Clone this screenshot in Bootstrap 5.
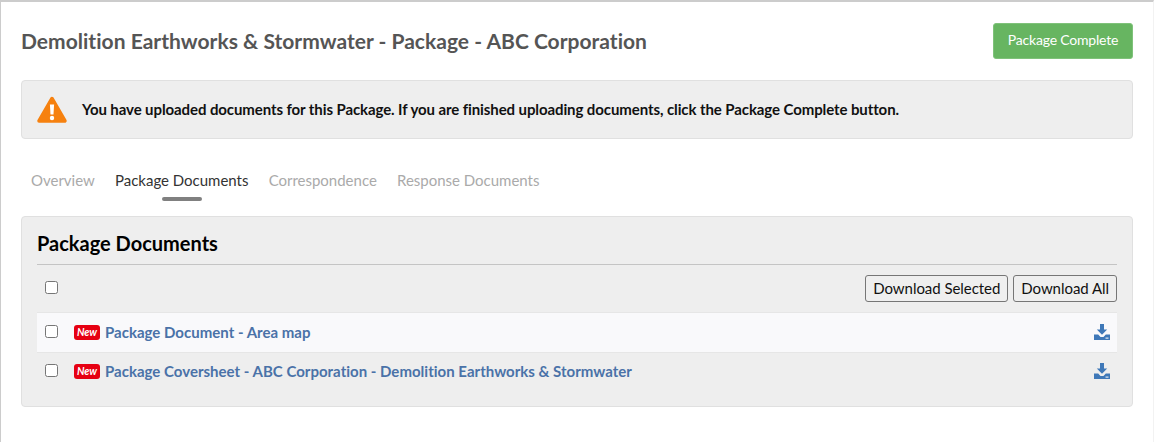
<!DOCTYPE html>
<html lang="en">
<head>
<meta charset="utf-8">
<title>Package Documents</title>
<link rel="stylesheet" href="https://cdn.jsdelivr.net/npm/bootstrap@5.3.0/dist/css/bootstrap.min.css">
<style>
html, body { height: 100%; }
body { font-family: Lato, "Liberation Sans", sans-serif; background: #fff; color: #000; font-size: 15px; }
.page-frame { height: 442px; overflow: hidden; border-top: 2px solid #ccc; border-left: 1px solid #ccc; border-right: 1px solid #f2f2f2; padding: 21px 20px 0 20px; }
.page-head { height: 36px; margin-bottom: 21px; }
.page-title { font-size: 21px; font-weight: 700; color: #555; margin: 0; letter-spacing: .02px; }
.btn-complete { height: 36px; width: 140px; padding: 0 0 3px; font-size: 14px; letter-spacing: -.2px; color: #fff; background: #67b561; border: 1px solid #7fc27a; border-radius: 3px; }
.notice { height: 59px; background: #eee; border: 1px solid #e0e0e0; border-radius: 4px; padding: 0 15px 0 14px; gap: 14px; font-size: 15px; letter-spacing: -.095px; font-weight: 700; color: #111; margin-bottom: 26px; }
.tab-bar { gap: 20.2px; padding-left: 10px; height: 51px; }
.tab-item { position: relative; display: block; font-size: 15px; line-height: 30px; color: #aaa; text-decoration: none; letter-spacing: -.01px; }
.tab-item.on { color: #333; }
.tab-item.on::after { content: ""; position: absolute; left: 47px; top: 32px; width: 40px; height: 4px; border-radius: 2px; background: #808080; }
.docs-panel { height: 191px; background: #eee; border: 1px solid #e0e0e0; border-radius: 4px; padding: 11px 15px 0; }
.docs-title { font-size: 20px; font-weight: 700; color: #000; line-height: 31px; height: 37px; border-bottom: 1px solid #c4c4c4; margin: 0; }
.tool-row { height: 47px; padding: 0 0 0 8px; }
.pick { width: 13px; height: 13px; margin: 0 0 2px; border: 1px solid #767676; border-radius: 2.5px; background: #fff; appearance: none; flex: none; }
.btn-plain { height: 27px; padding: 0 7px; font-size: 15px; line-height: 25px; letter-spacing: -.05px; color: #111; background: #efefef; border: 1px solid #767676; border-radius: 3px; }
.doc-row { padding: 0 7px 1px 8px; }
.doc-row.shade { height: 41px; background: #f9f9fb; border-top: 1px solid #e6e6e6; border-bottom: 1px solid #e6e6e6; }
.doc-row.plain { height: 37px; }
.flag-new { width: 26px; height: 15px; margin: 0 5px 0 16px; background: #e60012; color: #fff; font-size: 10.5px; font-weight: 700; font-style: italic; line-height: 15px; text-align: center; border-radius: 3px; flex: none; }
.doc-link { font-size: 15px; font-weight: 700; color: #4a72a8; text-decoration: none; letter-spacing: .01px; }
.gap-tools { gap: 5px; }
</style>
</head>
<body>
<div class="page-frame">
  <div class="page-head d-flex justify-content-between align-items-center">
    <h1 class="page-title">Demolition Earthworks &amp; Stormwater - Package - ABC Corporation</h1>
    <button type="button" class="btn btn-complete">Package Complete</button>
  </div>

  <div class="notice d-flex align-items-center">
    <svg width="32" height="28" viewBox="0 0 32 28" aria-hidden="true">
      <path d="M16 2.5 L29 25 H3 Z" fill="#f6810f" stroke="#f6810f" stroke-width="3.5" stroke-linejoin="round"/>
      <path d="M13.9 8.5h4.2l-.6 10h-3z" fill="#fff"/>
      <circle cx="16" cy="22" r="2.2" fill="#fff"/>
    </svg>
    <span>You have uploaded documents for this Package. If you are finished uploading documents, click the Package Complete button.</span>
  </div>

  <nav class="tab-bar d-flex">
    <a class="tab-item" href="#">Overview</a>
    <a class="tab-item on" href="#">Package Documents</a>
    <a class="tab-item" href="#">Correspondence</a>
    <a class="tab-item" href="#">Response Documents</a>
  </nav>

  <section class="docs-panel">
    <h2 class="docs-title">Package Documents</h2>
    <div class="tool-row d-flex align-items-center justify-content-between">
      <input class="pick" type="checkbox" aria-label="Select all">
      <div class="d-flex gap-tools">
        <button type="button" class="btn btn-plain">Download Selected</button>
        <button type="button" class="btn btn-plain">Download All</button>
      </div>
    </div>
    <div class="doc-row shade d-flex align-items-center">
      <input class="pick" type="checkbox" aria-label="Select document">
      <span class="flag-new">New</span>
      <a class="doc-link flex-grow-1" href="#">Package Document - Area map</a>
      <svg width="16" height="16" viewBox="0 0 16 16" aria-hidden="true"><path d="M6 0h4v5.5h3.2L8 10.8 2.8 5.5H6z" fill="#3f78b8"/><path d="M0 10.5h4.2L6.5 13h3l2.3-2.5H16V16H0z" fill="#3f78b8"/><rect x="11.5" y="13.6" width="3" height="1" fill="#fff"/></svg>
    </div>
    <div class="doc-row plain d-flex align-items-center">
      <input class="pick" type="checkbox" aria-label="Select document">
      <span class="flag-new">New</span>
      <a class="doc-link flex-grow-1" href="#">Package Coversheet - ABC Corporation - Demolition Earthworks &amp; Stormwater</a>
      <svg width="16" height="16" viewBox="0 0 16 16" aria-hidden="true"><path d="M6 0h4v5.5h3.2L8 10.8 2.8 5.5H6z" fill="#3f78b8"/><path d="M0 10.5h4.2L6.5 13h3l2.3-2.5H16V16H0z" fill="#3f78b8"/><rect x="11.5" y="13.6" width="3" height="1" fill="#fff"/></svg>
    </div>
  </section>
</div>
<script src="https://cdn.jsdelivr.net/npm/bootstrap@5.3.0/dist/js/bootstrap.bundle.min.js"></script>
</body>
</html>
